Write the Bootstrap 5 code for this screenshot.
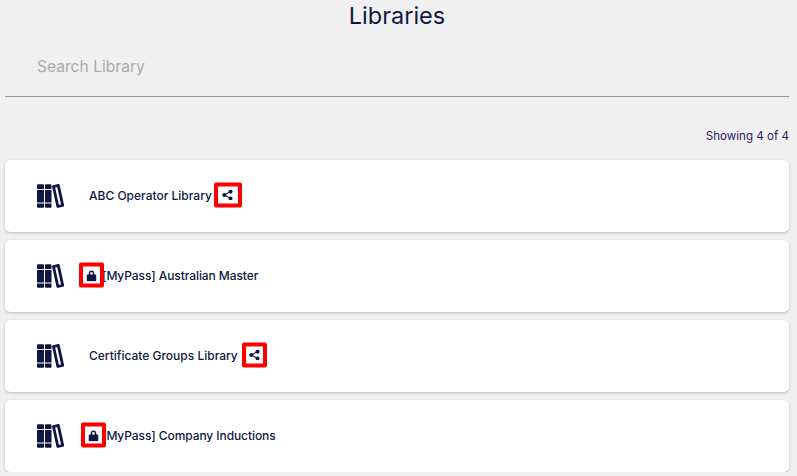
<!DOCTYPE html>
<html lang="en">
<head>
    <meta charset="UTF-8">
    <meta name="viewport" content="width=device-width, initial-scale=1.0">
    <title>Libraries</title>
    <link rel="stylesheet" href="https://cdn.jsdelivr.net/npm/bootstrap@5.3.0/dist/css/bootstrap.min.css">
    <style>
        body { font-family: Inter, "Noto Sans", sans-serif; background-color: #f0f0f0; color: #0e1744; overflow: hidden; }
        .page-wrap { padding: 0 8px 0 5px; }
        .page-title { font-size: 23.5px; font-weight: 400; line-height: 32px; margin: 0; color: #0e1744; }
        .search-box { height: 65px; border-bottom: 1px solid #999; }
        .search-box input { background: transparent; border: 0; outline: 0; box-shadow: none; padding: 4px 0 0 32px; font-size: 15.6px; color: #333; height: 65px; }
        .search-box input::placeholder { color: #aaa; opacity: 1; }
        .count-text { font-size: 11.6px; line-height: 16px; margin-top: 31px; margin-bottom: 16px; color: #2b1b5e; }
        .lib-list { gap: 8px; }
        .lib-card { height: 72px; border: 0; border-radius: 5px; box-shadow: 0 1px 3px rgba(0,0,0,.22); }
        .lib-icon { width: 28px; height: 24px; margin-left: 31px; margin-right: 25px; flex-shrink: 0; }
        .lib-name { font-size: 12px; font-weight: 500; color: #0e1744; white-space: nowrap; }
        .lib-name.locked { letter-spacing: -.08px; }
        .tag-wrap { position: relative; display: inline-block; width: 13px; height: 12px; vertical-align: -1px; }
        .tag-wrap.after { width: 0; margin-left: 2px; }
        .tag-box { position: absolute; top: 50%; width: 26px; height: 25px; transform: translateY(-50%); border: 4px solid #f00; border-radius: 2px; display: flex; align-items: center; justify-content: center; }
        .tag-share { left: 0; width: 28px; }
        .tag-share.narrow { left: 2px; width: 25px; }
        .tag-lock { left: -10px; width: 25px; }
        .tag-lock.shifted { left: -8px; width: 25px; }
        .tag-box svg { display: block; }
    </style>
</head>
<body>
    <svg width="0" height="0" class="position-absolute">
        <defs>
            <symbol id="books" viewBox="0 0 28 24">
                <path fill="#0e1744" d="M2 0.300h5a1 1 0 0 1 1 1v3.700h-7v-3.700a1 1 0 0 1 1-1zM1 6h7v12.500h-7zM1 19.500h7v3.200a1 1 0 0 1-1 1h-5a1 1 0 0 1-1-1zM10 0.300h4.500a1 1 0 0 1 1 1v3.700h-6.500v-3.700a1 1 0 0 1 1-1zM9 6h6.500v12.500h-6.500zM9 19.500h6.500v3.200a1 1 0 0 1-1 1h-4.500a1 1 0 0 1-1-1z"/>
                <path fill="none" stroke="#0e1744" stroke-width="2.800" stroke-linejoin="round" d="M17.500 2.500l4.800-1.100 4.400 20-4.900 1.100z"/>
            </symbol>
            <symbol id="share" viewBox="0 0 12 12">
                <circle cx="9.300" cy="2.300" r="2.200" fill="#0e1744"/>
                <circle cx="2.500" cy="6" r="2.200" fill="#0e1744"/>
                <circle cx="9.300" cy="9.700" r="2.200" fill="#0e1744"/>
                <path d="M9.300 2.300L2.500 6l6.800 3.700" fill="none" stroke="#0e1744" stroke-width="1.200"/>
            </symbol>
            <symbol id="lock" viewBox="0 0 12 13">
                <path fill="#0e1744" d="M3 5.500V4a3 3 0 0 1 6 0v1.500h1.200a1 1 0 0 1 1 1V12a1 1 0 0 1-1 1H1.800a1 1 0 0 1-1-1V6.500a1 1 0 0 1 1-1zM4.600 5.500h2.800V4a1.400 1.400 0 0 0-2.800 0z"/>
            </symbol>
        </defs>
    </svg>

    <div class="page-wrap">
        <h1 class="page-title text-center">Libraries</h1>
        <div class="search-box">
            <input type="text" class="form-control" placeholder="Search Library">
        </div>
        <div class="count-text text-end">Showing 4 of 4</div>

        <div class="lib-list d-flex flex-column">
            <div class="card lib-card flex-row align-items-center">
                <svg class="lib-icon"><use href="#books"/></svg>
                <span class="lib-name">ABC Operator Library<span class="tag-wrap after"><span class="tag-box tag-share"><svg width="11" height="11"><use href="#share"/></svg></span></span></span>
            </div>
            <div class="card lib-card flex-row align-items-center">
                <svg class="lib-icon"><use href="#books"/></svg>
                <span class="lib-name locked"><span class="tag-wrap"><span class="tag-box tag-lock"><svg width="11" height="12"><use href="#lock"/></svg></span></span>[MyPass] Australian Master</span>
            </div>
            <div class="card lib-card flex-row align-items-center">
                <svg class="lib-icon"><use href="#books"/></svg>
                <span class="lib-name">Certificate Groups Library<span class="tag-wrap after"><span class="tag-box tag-share narrow"><svg width="11" height="11"><use href="#share"/></svg></span></span></span>
            </div>
            <div class="card lib-card flex-row align-items-center">
                <svg class="lib-icon"><use href="#books"/></svg>
                <span class="lib-name locked"><span class="tag-wrap"><span class="tag-box tag-lock shifted"><svg width="11" height="12"><use href="#lock"/></svg></span></span>[MyPass] Company Inductions</span>
            </div>
        </div>
    </div>
</body>
</html>
